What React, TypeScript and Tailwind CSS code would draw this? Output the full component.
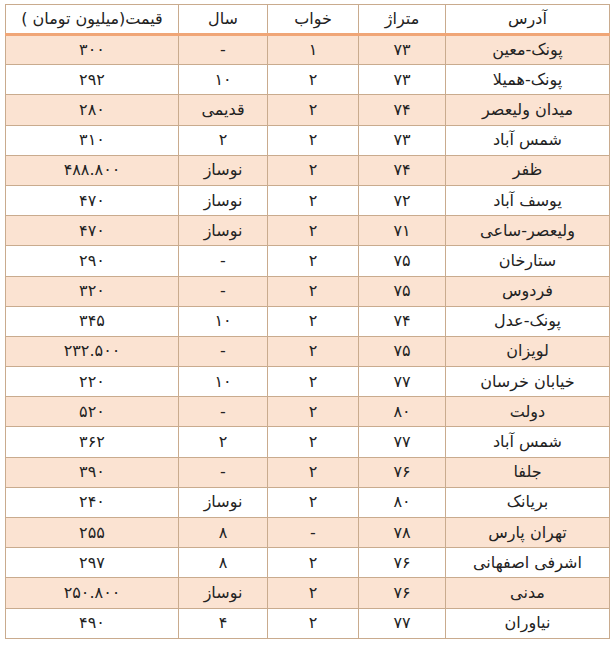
const headers = ["آدرس", "متراژ", "خواب", "سال", "قیمت(میلیون تومان )"]

const rows: string[][] = [
    ["پونک-معین", "۷۳", "۱", "-", "۳۰۰"],
    ["پونک-همیلا", "۷۳", "۲", "۱۰", "۲۹۲"],
    ["میدان ولیعصر", "۷۴", "۲", "قدیمی", "۲۸۰"],
    ["شمس آباد", "۷۳", "۲", "۲", "۳۱۰"],
    ["ظفر", "۷۴", "۲", "نوساز", "۴۸۸.۸۰۰"],
    ["یوسف آباد", "۷۲", "۲", "نوساز", "۴۷۰"],
    ["ولیعصر-ساعی", "۷۱", "۲", "نوساز", "۴۷۰"],
    ["ستارخان", "۷۵", "۲", "-", "۲۹۰"],
    ["فردوس", "۷۵", "۲", "-", "۳۲۰"],
    ["پونک-عدل", "۷۴", "۲", "۱۰", "۳۴۵"],
    ["لویزان", "۷۵", "۲", "-", "۲۳۲.۵۰۰"],
    ["خیابان خرسان", "۷۷", "۲", "۱۰", "۲۲۰"],
    ["دولت", "۸۰", "۲", "-", "۵۲۰"],
    ["شمس آباد", "۷۷", "۲", "۲", "۳۶۲"],
    ["جلفا", "۷۶", "۲", "-", "۳۹۰"],
    ["بریانک", "۸۰", "۲", "نوساز", "۲۴۰"],
    ["تهران پارس", "۷۸", "-", "۸", "۲۵۵"],
    ["اشرفی اصفهانی", "۷۶", "۲", "۸", "۲۹۷"],
    ["مدنی", "۷۶", "۲", "نوساز", "۲۵۰.۸۰۰"],
    ["نیاوران", "۷۷", "۲", "۴", "۴۹۰"],
]

export default function App() {
    return (
        <main className="min-h-screen w-full bg-white pl-[5px] pt-[4px] font-['DejaVu_Sans',sans-serif] text-[16px] text-[#222]">
            <table dir="rtl" className="w-[604px] table-fixed border-collapse">
                <colgroup>
                    <col className="w-[164px]" />
                    <col className="w-[87px]" />
                    <col className="w-[91px]" />
                    <col className="w-[89px]" />
                    <col className="w-[173px]" />
                </colgroup>
                <thead>
                    <tr className="h-[30px]">
                        {headers.map((h) => (
                            <th
                                key={h}
                                className="border border-b-[3px] border-[#c9ab8e] border-b-[#f0a677] bg-white p-0 text-center font-normal leading-none"
                            >
                                {h}
                            </th>
                        ))}
                    </tr>
                </thead>
                <tbody>
                    {rows.map((row, i) => (
                        <tr key={i} className={`h-[30.2px] ${i % 2 == 0 ? "bg-[#fbe3d2]" : "bg-white"}`}>
                            {row.map((cell, j) => (
                                <td key={j} className="border border-[#c9ab8e] p-0 text-center leading-none">
                                    {cell}
                                </td>
                            ))}
                        </tr>
                    ))}
                </tbody>
            </table>
        </main>
    )
}
